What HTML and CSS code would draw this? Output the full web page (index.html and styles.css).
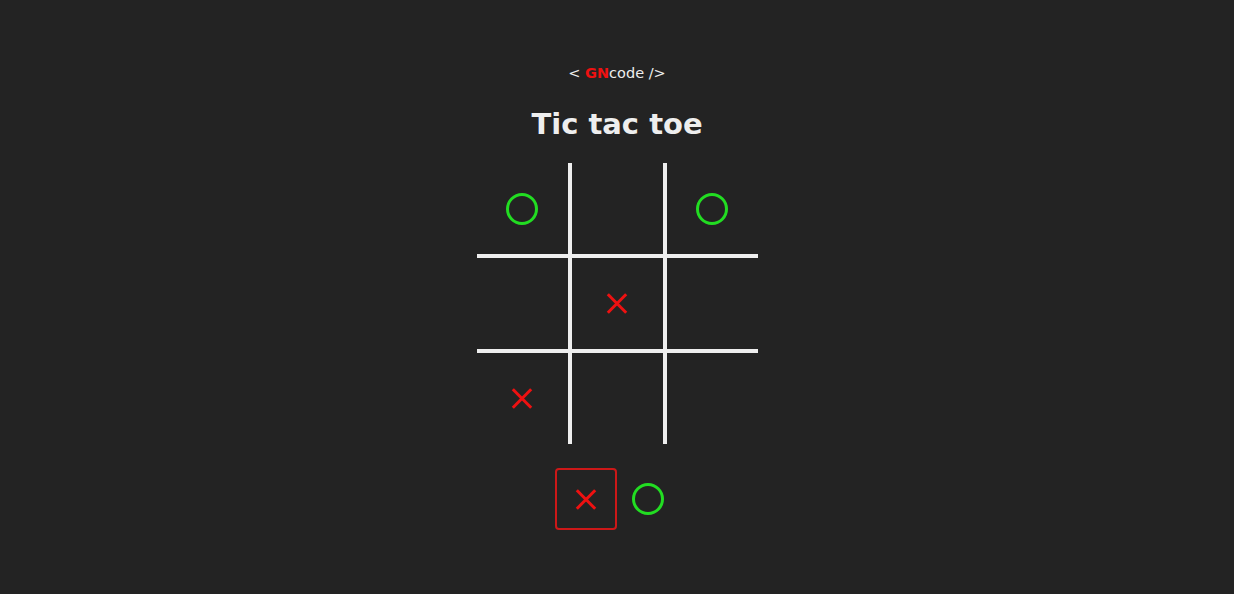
FILE: index.html
```html
<!DOCTYPE html>
<html>
<head>
<meta charset="utf-8">
<link rel="stylesheet" href="styles.css">
</head>
<body>
<div class="page">
  <div class="brand">&lt; <b class="gn">GN</b>code /&gt;</div>
  <h1 class="title">Tic tac toe</h1>
  <div class="board">
    <div class="cell"><span class="o"></span></div>
    <div class="cell"></div>
    <div class="cell"><span class="o"></span></div>
    <div class="cell"></div>
    <div class="cell"><span class="x"></span></div>
    <div class="cell"></div>
    <div class="cell"><span class="x"></span></div>
    <div class="cell"></div>
    <div class="cell"></div>
  </div>
  <div class="turns">
    <div class="turn active"><span class="x"></span></div>
    <div class="turn"><span class="o"></span></div>
  </div>
</div>
</body>
</html>
```
FILE: styles.css
```css
html, body {
  margin: 0;
  padding: 0;
  background: #232323;
  height: 100%;
}
.page {
  display: flex;
  flex-direction: column;
  align-items: center;
  padding-top: 64px;
  font-family: "DejaVu Sans", Verdana, sans-serif;
  color: #eeeeee;
}
.brand {
  font-size: 14.5px;
  line-height: 18px;
}
.gn {
  color: #ee1111;
}
.title {
  margin: 24px 0 0;
  font-size: 29px;
  line-height: 36px;
  font-weight: bold;
}
.board {
  margin-top: 21px;
  display: grid;
  grid-template-columns: repeat(3, 91px);
  grid-template-rows: repeat(3, 91px);
  gap: 4px;
  background: #eeeeee;
  width: 281px;
  height: 281px;
  overflow: hidden;
}
.board .cell {
  background: #232323;
  display: flex;
  align-items: center;
  justify-content: center;
}
.o {
  display: block;
  width: 26px;
  height: 26px;
  border: 3px solid #22dd22;
  border-radius: 50%;
}
.x {
  display: block;
  position: relative;
  width: 22px;
  height: 22px;
}
.x::before, .x::after {
  content: "";
  position: absolute;
  left: -2px;
  top: 9.5px;
  width: 26px;
  height: 3px;
  background: #ee1111;
  transform: rotate(45deg);
}
.x::after {
  transform: rotate(-45deg);
}
.turns {
  margin-top: 24px;
  display: flex;
  align-items: center;
}
.turn {
  box-sizing: border-box;
  width: 62px;
  height: 62px;
  border: 2px solid transparent;
  border-radius: 4px;
  display: flex;
  align-items: center;
  justify-content: center;
}
.turn.active {
  border-color: #cc1818;
}
```
